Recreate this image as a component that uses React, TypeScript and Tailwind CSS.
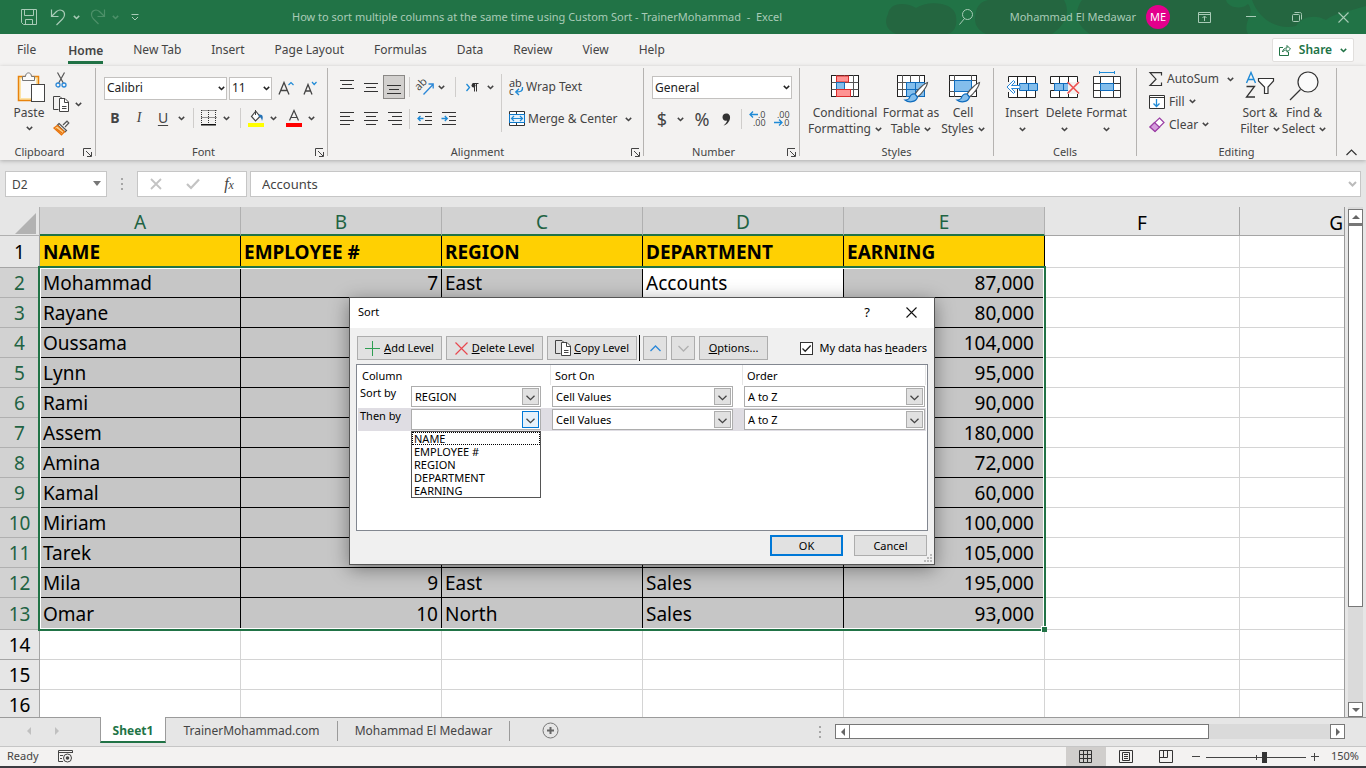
import React from 'react';
import type { ReactNode } from 'react';

type Kids = { children?: ReactNode };

/* ---------- small drawings ---------- */

function Caret({ className = 'text-[#444]' }: { className?: string }) {
  return (
    <svg width="7" height="5" viewBox="0 0 7 5" className={`shrink-0 ${className}`} aria-hidden="true">
      <path d="M0.8 0.9 3.5 3.5 6.2 0.9" fill="none" stroke="currentColor" strokeWidth="1.5" />
    </svg>
  );
}

function Svg({ w, h, children, className = '' }: { w: number; h: number; children: ReactNode; className?: string }) {
  return (
    <svg width={w} height={h} viewBox={`0 0 ${w} ${h}`} fill="none" className={`shrink-0 overflow-visible ${className}`} aria-hidden="true">
      {children}
    </svg>
  );
}

function PasteIcon() {
  return (
    <Svg w={28} h={31}>
      <rect x="1.5" y="4.5" width="20" height="24" fill="#fce3a6" stroke="#e8830c" strokeWidth="1.5" />
      <rect x="4" y="7" width="15" height="19" fill="#fafafa" />
      <path d="M5.5 8.500V4.500H8.500C8.500 -0.300 14.500 -0.300 14.500 4.500H17.500V8.500Z" fill="#fafafa" stroke="#777" />
      <rect x="14.500" y="12.500" width="13" height="17" fill="#fff" stroke="#444" />
    </Svg>
  );
}

function CutIcon() {
  return (
    <Svg w={12} h={16}>
      <path d="M2.500 0.500 8.300 11M9.500 0.500 3.700 11" stroke="#555" strokeWidth="1.200" />
      <circle cx="3" cy="13" r="2" stroke="#2b88d8" strokeWidth="1.300" />
      <circle cx="9" cy="13" r="2" stroke="#2b88d8" strokeWidth="1.300" />
    </Svg>
  );
}

function CopyIcon() {
  return (
    <Svg w={17} h={16}>
      <path d="M5.500 13.500H0.500V0.500H7L8.500 2" stroke="#444" />
      <path d="M6.500 2.500H12L15.500 6V15.500H6.500Z" fill="#fff" stroke="#444" />
      <path d="M11.500 2.500V6.500H15.500M9 10.500H13.500M9 12.500H13.500" stroke="#444" />
    </Svg>
  );
}

function PainterIcon() {
  return (
    <Svg w={17} h={16}>
      <path d="M10 5 14 1.200 15.800 3 12 7" fill="#fff" stroke="#555" strokeWidth="1.200" />
      <path d="M6 3.500 13.500 10.500 12 12 4.500 5Z" fill="#fff" stroke="#555" strokeWidth="1.200" />
      <path d="M4.300 5.500 1 8 8.500 14.800 11.500 11.800Z" fill="#fbd08a" stroke="#e8730c" strokeWidth="1.300" />
      <path d="M3 8.500 9 13" stroke="#e8730c" strokeWidth="1.500" />
    </Svg>
  );
}

function LinesIcon({ rows }: { rows: [number, number, number][] }) {
  return (
    <Svg w={16} h={16}>
      {rows.map(([x, y, w], i) => (
        <rect key={i} x={x} y={y} width={w} height="1" fill="#333" />
      ))}
    </Svg>
  );
}

function IndentIcon({ into }: { into?: boolean }) {
  return (
    <Svg w={16} h={16}>
      <path d="M1 1.500H15M8 5.500H15M8 9.500H15M1 13.500H15" stroke="#333" />
      {into ? (
        <path d="M0.500 7.500H6M3.800 5 6.300 7.500 3.800 10" stroke="#1f8ad6" strokeWidth="1.300" />
      ) : (
        <path d="M1 7.500H6.500M3.500 5 1 7.500 3.500 10" stroke="#1f8ad6" strokeWidth="1.300" />
      )}
    </Svg>
  );
}

function BordersIcon() {
  return (
    <Svg w={16} h={16}>
      <path d="M0.500 0.500H15.500M0.500 7.500H15.500" stroke="#333" strokeDasharray="1 1" />
      <path d="M0.500 0V14M7.500 0V14M14.500 0V14" stroke="#333" strokeDasharray="1 1" />
      <rect y="14" width="15" height="1.500" fill="#111" />
    </Svg>
  );
}

function FillColorIcon() {
  return (
    <Svg w={17} h={17}>
      <path d="M7.500 1.500 3.500 6.500 7.500 11 12 6.500 8 1.500Z" fill="#fff" stroke="#444" strokeWidth="1.200" />
      <path d="M7.500 0V5" stroke="#444" />
      <path d="M11 4.500C15 4 15.500 7 14 11 13.500 8 12 6.500 10.500 6.500Z" fill="#2371b5" />
      <rect y="13" width="16" height="4" fill="#ff0" />
    </Svg>
  );
}

function OrientationIcon() {
  return (
    <Svg w={18} h={18}>
      <g transform="rotate(-45 6 9)">
        <text x="0" y="9" fontSize="11" fill="#444" fontFamily="Open Sans">ab</text>
      </g>
      <path d="M6.500 16.500 16 6.500M11.500 6H16.200V10.500" stroke="#2b88d8" strokeWidth="1.300" />
    </Svg>
  );
}

function WrapIcon() {
  return (
    <Svg w={15} h={17}>
      <text x="0" y="8" fontSize="11" fill="#333" fontFamily="Open Sans">ab</text>
      <text x="0" y="15.500" fontSize="10" fill="#333" fontFamily="Open Sans">c</text>
      <path d="M13.500 8C14 12 12 13 7 13M10 9.800 6.800 13 10 16" stroke="#1f8ad6" strokeWidth="1.400" />
    </Svg>
  );
}

function MergeIcon() {
  return (
    <Svg w={16} h={16}>
      <path d="M0.500 0.500H15.500V14.500H0.500Z" fill="#fff" stroke="#333" />
      <path d="M7.500 0V15" stroke="#333" />
      <rect x="0.500" y="3.500" width="15" height="8" fill="#e5f1fb" stroke="#0f79c9" />
      <path d="M2.500 7.500H13.500M5 5 2.500 7.500 5 10M11 5 13.500 7.500 11 10" stroke="#1f8ad6" strokeWidth="1.200" />
    </Svg>
  );
}

function DecimalIcon({ less }: { less?: boolean }) {
  return (
    <Svg w={17} h={18}>
      {less ? (
        <>
          <text x="4" y="7.500" fontSize="9" fill="#444" fontFamily="Open Sans">.00</text>
          <text x="9" y="16" fontSize="9" fill="#444" fontFamily="Open Sans">.0</text>
          <path d="M1 12.500H9M6 9.500 9 12.500 6 15.500" stroke="#1f8ad6" strokeWidth="1.300" />
        </>
      ) : (
        <>
          <text x="9" y="7.500" fontSize="9" fill="#444" fontFamily="Open Sans">.0</text>
          <text x="4" y="16" fontSize="9" fill="#444" fontFamily="Open Sans">.00</text>
          <path d="M9 4.500H1M4 1.500 1 4.500 4 7.500" stroke="#1f8ad6" strokeWidth="1.300" />
        </>
      )}
    </Svg>
  );
}

function GridBase() {
  return (
    <>
      <rect x="0.500" y="0.500" width="27" height="21" fill="#fff" stroke="#222" />
      <path d="M0.500 7.500H27.500M0.500 14.500H27.500M5.500 0V22M13.500 0V22M22.500 0V22" stroke="#555" />
    </>
  );
}

function ConditionalIcon() {
  return (
    <Svg w={28} h={28}>
      <GridBase />
      <rect x="5.500" y="1" width="12" height="6" fill="#ff9393" stroke="#d92c2c" />
      <rect x="5.500" y="7.500" width="8" height="7" fill="#83beec" stroke="#1b6fb5" />
      <rect x="5.500" y="14.500" width="14" height="7" fill="#ff9393" stroke="#d92c2c" />
    </Svg>
  );
}

function Brush() {
  return (
    <>
      <path d="M30.500 7.500C28 8 20 15 18 19.500L20.500 22C24 19.500 30 12 30.500 7.500Z" fill="#fff" stroke="#555" strokeWidth="1.200" />
      <path d="M18 19C14 18.500 13 21 12 23.500 11 25 9 25 8 25 11 27.500 19 28 20.500 22Z" fill="#83beec" stroke="#0f6cbd" strokeWidth="1.200" />
    </>
  );
}

function FormatTableIcon() {
  return (
    <Svg w={32} h={28}>
      <GridBase />
      <path d="M9.500 7.500H27.500V21.500H9.500Z" fill="#83beec" stroke="#0f6cbd" />
      <path d="M9.500 14.500H27.500M18.500 7.500V21.500" stroke="#0f6cbd" />
      <Brush />
    </Svg>
  );
}

function CellStylesIcon() {
  return (
    <Svg w={32} h={28}>
      <rect x="0.500" y="0.500" width="27" height="21" fill="#fff" stroke="#222" />
      <path d="M0.500 5.500H27.500M0.500 16.500H27.500M5.500 0V22M22.500 0V22" stroke="#555" />
      <rect x="5.500" y="5.500" width="17" height="11" fill="#83beec" stroke="#0f6cbd" />
      <Brush />
    </Svg>
  );
}

function InsertIcon() {
  return (
    <Svg w={32} h={28}>
      <path d="M2.500 5.500H29.500V26.500H2.500ZM11.500 5V27M20.500 5V27" fill="#fff" stroke="#222" />
      <rect x="1" y="11" width="9" height="10" fill="#f3f2f1" />
      <path d="M13.500 12.500H31.500V19.500H13.500ZM22.500 12V20" fill="#83beec" stroke="#0f6cbd" />
      <path d="M14 14.500H5.500L9 11 7.500 9.500 1 16 7.500 22.500 9 21 5.500 17.500H14Z" fill="#fff" stroke="#2b88d8" />
    </Svg>
  );
}

function DeleteIcon() {
  return (
    <Svg w={32} h={28}>
      <path d="M2.500 12.500V5.500H29.500V12.500ZM2.500 19.500V26.500H29.500V19.500ZM11.500 5V12M20.500 5V12M11.500 20V27M20.500 20V27" fill="#fff" stroke="#222" />
      <path d="M6.500 12.500H22.500V19.500H6.500ZM15.500 12V20" fill="#83beec" stroke="#0f6cbd" />
      <rect x="20" y="11" width="12" height="12" fill="#f3f2f1" />
      <path d="M19.500 11 31 22.500M31 11 19.500 22.500" stroke="#ee5252" strokeWidth="1.700" />
    </Svg>
  );
}

function FormatIcon() {
  return (
    <Svg w={28} h={28}>
      <path d="M6.500 1.500H21.500M6.500 0V3M21.500 0V3" stroke="#1f8ad6" />
      <path d="M0.500 5.500H27.500V26.500H0.500ZM7.500 5V27M20.500 5V27M0.500 12.500H27.500M0.500 19.500H27.500" fill="#fff" stroke="#333" />
      <rect x="7.500" y="12.500" width="13" height="7" fill="#83beec" stroke="#0f6cbd" />
    </Svg>
  );
}

function SortFilterIcon() {
  return (
    <Svg w={30} h={28}>
      <path d="M1.500 12 6 1.500 10.500 12M3 8.500H9" stroke="#1f8ad6" strokeWidth="1.400" />
      <path d="M1.500 15.500H9.500L1.500 26H10" stroke="#333" strokeWidth="1.300" />
      <path d="M13.500 7.500H28.500V10L23 16V22.500H19.500V16L13.500 10Z" fill="#fff" stroke="#333" strokeWidth="1.200" />
    </Svg>
  );
}

function FindIcon() {
  return (
    <Svg w={30} h={30}>
      <circle cx="19" cy="11" r="10" fill="#fafafa" stroke="#333" strokeWidth="1.200" />
      <path d="M11.500 18.500 1 29" stroke="#333" strokeWidth="1.300" />
    </Svg>
  );
}

/* ---------- ribbon parts ---------- */

function IconBtn({ label, className = 'w-6', children }: Kids & { label: string; className?: string }) {
  return (
    <button type="button" aria-label={label} className={`flex h-6 shrink-0 items-center justify-center ${className}`}>
      {children}
    </button>
  );
}

function Rule({ className = 'mx-1' }: { className?: string }) {
  return <span className={`h-5 w-px shrink-0 bg-[#cfcdcb] ${className}`} />;
}

function Group({ name, launcher, className, children }: Kids & { name: string; launcher?: boolean; className: string }) {
  return (
    <section aria-label={name} className={`flex h-[88px] shrink-0 flex-col border-r border-[#b5b3b1] ${className}`}>
      <div className="min-h-0 flex-1">{children}</div>
      <div className="flex h-2 items-center text-[11px] leading-4">
        <span className="flex-1 text-center">{name}</span>
        {launcher && (
          <button type="button" aria-label={`${name} settings`} className="flex w-4 justify-end pr-[3px]">
            <Svg w={9} h={9}>
              <path d="M0.500 8V0.500H8M3 3 8 8M8.500 4V8.500H4" stroke="#444" />
            </Svg>
          </button>
        )}
      </div>
    </section>
  );
}

function BigButton({ icon, lines, className }: { icon: ReactNode; lines: [string, string?]; className: string }) {
  return (
    <button type="button" className={`flex shrink-0 flex-col items-center leading-4 whitespace-nowrap ${className}`}>
      <span className="flex h-[34px] items-start">{icon}</span>
      <span>{lines[0]}</span>
      <span className="flex h-4 items-center gap-1">
        {lines[1]}
        <Caret />
      </span>
    </button>
  );
}

function Combo({ label, value, className }: { label: string; value: string; className: string }) {
  return (
    <div className={`relative h-[23px] shrink-0 ${className}`}>
      <select aria-label={label} className="block h-full w-full appearance-none border border-[#c3c1bf] bg-white pl-0.5 text-xs text-[#222]">
        <option>{value}</option>
      </select>
      <span className="pointer-events-none absolute inset-y-0 right-0.5 flex items-center">
        <Caret className="text-[#222]" />
      </span>
    </div>
  );
}

/* ---------- sheet ---------- */

const rows: [string, string, string, string, string][] = [
  ['Mohammad', '7', 'East', 'Accounts', '87,000'],
  ['Rayane', '', '', '', '80,000'],
  ['Oussama', '', '', '', '104,000'],
  ['Lynn', '', '', '', '95,000'],
  ['Rami', '', '', '', '90,000'],
  ['Assem', '', '', '', '180,000'],
  ['Amina', '', '', '', '72,000'],
  ['Kamal', '', '', '', '60,000'],
  ['Miriam', '', '', '', '100,000'],
  ['Tarek', '', '', '', '105,000'],
  ['Mila', '9', 'East', 'Sales', '195,000'],
  ['Omar', '10', 'North', 'Sales', '93,000'],
];

function Sheet() {
  return (
    <div className="relative min-w-0 flex-1 overflow-hidden border-r border-[#9b9b9b] bg-white">
      <table className="w-full table-fixed border-separate border-spacing-0 text-[19px] leading-6 whitespace-nowrap text-black">
        <colgroup>
          <col className="w-10" />
          <col className="w-[201px]" />
          <col className="w-[201px]" />
          <col className="w-[201px]" />
          <col className="w-[201px]" />
          <col className="w-[201px]" />
          <col className="w-[195px]" />
          <col />
        </colgroup>
        <thead>
          <tr className="h-[29px] bg-[#e6e6e6]">
            <th className="border-r border-b border-[#b0b0b0] p-0">
              <Svg w={21} h={21} className="ml-auto mr-[3px] mt-1">
                <path d="M21 0V21H0Z" fill="#b2b2b2" />
              </Svg>
            </th>
            {['A', 'B', 'C', 'D', 'E'].map((c) => (
              <th key={c} className="border-r border-b-2 border-r-[#b0b0b0] border-b-[#217346] bg-[#d2d2d2] p-0 pt-[3px] font-normal text-[#1f6343]">
                {c}
              </th>
            ))}
            <th className="border-r border-b border-[#a5a5a5] p-0 pt-[3px] font-normal">F</th>
            <th className="border-b border-[#a5a5a5] p-0 pt-[3px] pr-px text-right font-normal">G</th>
          </tr>
        </thead>
        <tbody>
          <tr className="h-8">
            <th className="border-r border-b border-[#a5a5a5] bg-[#e6e6e6] p-0 font-normal">1</th>
            {['NAME', 'EMPLOYEE #', 'REGION', 'DEPARTMENT', 'EARNING'].map((h) => (
              <th key={h} className="border-r border-b border-black bg-[#ffd002] py-0 pr-0 pl-[3px] text-left font-bold">
                {h}
              </th>
            ))}
            <td className="border-r border-b border-[#d4d4d4] p-0" />
            <td className="border-b border-[#d4d4d4] p-0" />
          </tr>
          {rows.map((r, i) => (
            <tr key={r[0]} className={i === rows.length - 1 ? 'h-8' : 'h-[30px]'}>
              <th className="border-r border-b border-[#b0b0b0] bg-[#d2d2d2] p-0 font-normal text-[#1f6343]">{i + 2}</th>
              {r.map((v, j) => (
                <td
                  key={j}
                  className={`border-r border-b border-black py-0 pl-[3px] ${j === 3 && i === 0 ? 'bg-white' : 'bg-[#c6c6c6]'} ${
                    j === 4 ? 'pr-2.5 text-right' : j === 1 ? 'pr-[3px] text-right' : 'pr-0'
                  }`}
                >
                  {v}
                </td>
              ))}
              <td className="border-r border-b border-[#d4d4d4] p-0" />
              <td className="border-b border-[#d4d4d4] p-0" />
            </tr>
          ))}
          {[14, 15, 16].map((n) => (
            <tr key={n} className="h-[30px]">
              <th className="border-r border-b border-[#a5a5a5] bg-[#e6e6e6] p-0 font-normal">{n}</th>
              {[0, 1, 2, 3, 4, 5].map((k) => (
                <td key={k} className="border-r border-b border-[#d4d4d4] p-0" />
              ))}
              <td className="border-b border-[#d4d4d4] p-0" />
            </tr>
          ))}
        </tbody>
      </table>
      <div className="pointer-events-none absolute top-[59px] left-[38px] h-[365px] w-[1008px] border-2 border-[#217346]">
        <div className="h-full border border-white" />
        <span className="absolute -right-[3px] -bottom-[3px] h-1.5 w-1.5 border-t border-l border-white bg-[#217346]" />
      </div>
    </div>
  );
}

/* ---------- dialog ---------- */

function DlgButton({ children, className = '', label }: Kids & { className?: string; label?: string }) {
  return (
    <button type="button" aria-label={label} className={`flex shrink-0 items-center justify-center bg-[#e1e1e1] whitespace-nowrap ${className}`}>
      {children}
    </button>
  );
}

function DlgSelect({ label, value, active, className = '' }: { label: string; value: string; active?: boolean; className?: string }) {
  return (
    <div className={`relative h-[21px] ${className}`}>
      <select aria-label={label} className="block h-full w-full appearance-none border border-[#adadad] bg-white pl-[3px] text-[11px] text-black">
        <option>{value}</option>
      </select>
      <span
        className={`pointer-events-none absolute top-0.5 right-0.5 flex h-[17px] w-[17px] items-center justify-center border ${
          active ? 'border-[#0078d7] bg-[#e5f1fb]' : 'border-[#adadad] bg-[#e1e1e1]'
        }`}
      >
        <Svg w={9} h={6} className="mt-0.5">
          <path d="M0.500 0.700 4.500 4.700 8.500 0.700" stroke="#444" strokeWidth="1.300" />
        </Svg>
      </span>
    </div>
  );
}

function SortRow({ label, column, active }: { label: string; column: string; active?: boolean }) {
  return (
    <div className={`mx-px flex h-[23px] items-start gap-[11px] pt-px pr-px ${active ? 'bg-[#dfdde3]' : ''}`}>
      <div className="flex">
        <span className="w-[53px] pl-0.5 leading-[14px]">{label}</span>
        <DlgSelect label={`${label} column`} value={column} active={active} className="w-[130px]" />
      </div>
      <DlgSelect label={`${label} sort on`} value="Cell Values" className="flex-1" />
      <DlgSelect label={`${label} order`} value="A to Z" className="flex-1" />
    </div>
  );
}

function SortDialog() {
  return (
    <div
      role="dialog"
      aria-label="Sort"
      className="absolute top-[297px] left-[349px] flex h-[268px] w-[586px] flex-col border border-[#555] bg-[#f0f0f0] text-[11px] leading-[14px] text-black shadow-[0_4px_18px_rgba(0,0,0,0.4)]"
    >
      <div className="flex h-[30px] items-center bg-white pr-[17px] pb-0.5 pl-2">
        <span className="flex-1">Sort</span>
        <button type="button" aria-label="Help" className="mr-9 text-[13px]">?</button>
        <button type="button" aria-label="Close">
          <Svg w={11} h={11}>
            <path d="M0.500 0.500 10.500 10.500M10.500 0.500 0.500 10.500" stroke="#111" strokeWidth="1.100" />
          </Svg>
        </button>
      </div>
      <div className="flex h-9 items-center gap-1 px-[7px] pt-1">
        <DlgButton className="h-6 w-[85px] gap-1 border border-[#adadad]">
          <Svg w={15} h={15}>
            <path d="M7.500 0V15M0 7.500H15" stroke="#2e9e52" />
          </Svg>
          <span><u>A</u>dd Level</span>
        </DlgButton>
        <DlgButton className="h-6 w-[97px] gap-1 border border-[#adadad]">
          <Svg w={13} h={13}>
            <path d="M0.500 0.500 12.500 12.500M12.500 0.500 0.500 12.500" stroke="#e8484f" strokeWidth="1.200" />
          </Svg>
          <span><u>D</u>elete Level</span>
        </DlgButton>
        <div className="flex items-center gap-0.5">
          <DlgButton className="h-6 w-[90px] gap-0.5 border border-[#adadad]">
            <CopyIcon />
            <span><u>C</u>opy Level</span>
          </DlgButton>
          <span className="h-[26px] w-px bg-black" />
        </div>
        <DlgButton label="Move up" className="-ml-px h-6 w-6 border border-[#adadad]">
          <Svg w={11} h={7}>
            <path d="M0.500 6 5.500 1 10.500 6" stroke="#2b88d8" strokeWidth="1.300" />
          </Svg>
        </DlgButton>
        <DlgButton label="Move down" className="h-6 w-6 border border-[#adadad]">
          <Svg w={11} h={7}>
            <path d="M0.500 1 5.500 6 10.500 1" stroke="#b0b0b0" strokeWidth="1.300" />
          </Svg>
        </DlgButton>
        <DlgButton className="h-6 w-[69px] border border-[#adadad]">
          <span><u>O</u>ptions...</span>
        </DlgButton>
        <label className="ml-auto flex items-center gap-[7px] whitespace-nowrap">
          <span className="relative h-[13px] w-[13px]">
            <input type="checkbox" defaultChecked className="block h-[13px] w-[13px] appearance-none border border-[#333] bg-white" />
            <Svg w={13} h={13} className="pointer-events-none absolute inset-0">
              <path d="M2.500 6.500 5.200 9.200 10.700 3.500" stroke="#222" strokeWidth="1.300" />
            </Svg>
          </span>
          <span>My data has <u>h</u>eaders</span>
        </label>
      </div>
      <div className="mx-1.5 h-[167px] border border-[#828790] bg-white">
        <div className="flex h-5 items-center">
          <span className="h-5 w-[194px] border-r border-[#e5e5e5] pt-1 pl-[5px]">Column</span>
          <span className="h-5 w-48 border-r border-[#e5e5e5] pt-1 pl-1">Sort On</span>
          <span className="h-5 w-[183px] border-r border-[#e5e5e5] pt-1 pl-1">Order</span>
        </div>
        <SortRow label="Sort by" column="REGION" />
        <div className="relative">
          <SortRow label="Then by" column="" active />
          <ul role="listbox" aria-label="Columns" className="absolute top-[23px] left-[54px] w-[130px] border border-[#555] bg-white leading-[13px]">
            {['NAME', 'EMPLOYEE #', 'REGION', 'DEPARTMENT', 'EARNING'].map((o, i) => (
              <li
                key={o}
                role="option"
                aria-selected={i === 0}
                className={`h-[13px] pl-0.5 ${i === 0 ? 'outline-1 -outline-offset-1 outline-dotted outline-black' : ''}`}
              >
                {o}
              </li>
            ))}
          </ul>
        </div>
      </div>
      <div className="flex gap-[11px] pt-1 pr-[7px]">
        <DlgButton className="ml-auto h-[21px] w-[73px] border-2 border-[#0078d7]">OK</DlgButton>
        <DlgButton className="h-[21px] w-[73px] border border-[#adadad]">Cancel</DlgButton>
      </div>
      <Svg w={8} h={8} className="absolute right-0.5 bottom-0.5">
        <path d="M6 0h2v2h-2zM6 3h2v2h-2zM6 6h2v2h-2zM3 3h2v2h-2zM3 6h2v2h-2zM0 6h2v2h-2z" fill="#bbb" />
      </Svg>
    </div>
  );
}

/* ---------- bars ---------- */

function TitleBar() {
  return (
    <header className="relative flex h-[34px] shrink-0 items-center overflow-hidden bg-[#217346] text-[11px] text-[#a9cbb7]">
      <Svg w={490} h={34} className="absolute top-0 right-0">
        <g fill="#246640">
          <path d="M12 14C14 2 30 2 40 8 52 0 78 2 80 16 82 28 76 34 70 34H20C10 30 8 22 12 14Z" />
          <path d="M100 12C102 2 110 0 114 0H188C196 14 186 28 176 34H110C98 28 98 20 100 12Z" />
          <path d="M206 0H350C352 8 366 10 372 4 380 14 366 22 372 34H214C202 26 196 14 206 0Z" />
          <path d="M376 0H490V6C470 12 456 14 450 20 440 14 426 16 420 26 404 30 384 22 376 0Z" />
        </g>
      </Svg>
      <div className="relative flex w-[280px] shrink-0 items-center pl-[21px]">
        <button type="button" aria-label="Save">
          <Svg w={16} h={16}>
            <path d="M0.500 0.500H15.500V15.500H2.500L0.500 13.500ZM3.500 0.500V6.500H12.500V0.500M4.500 15.500V10.500H11.500V15.500" stroke="#a9cbb7" />
          </Svg>
        </button>
        <button type="button" aria-label="Undo" className="ml-3.5 flex items-center gap-1.5">
          <Svg w={16} h={17}>
            <path d="M0.500 0.500V7.500H7.500M0.500 7.500 5.500 2.500C9 -0.500 14 1.500 13.500 6 13.300 8 12.500 9 11.500 10L5.500 16" stroke="#a9cbb7" strokeWidth="1.200" />
          </Svg>
          <Caret className="text-[#a9cbb7]" />
        </button>
        <button type="button" aria-label="Redo" className="ml-2.5 flex items-center gap-1.5">
          <Svg w={16} h={17}>
            <path d="M14.500 0.500V7.500H7.500M14.500 7.500 9.500 2.500C6 -0.500 1 1.500 1.500 6 1.700 8 2.500 9 3.500 10L8.500 15" stroke="#4d9069" strokeWidth="1.200" />
          </Svg>
          <Caret className="text-[#4d9069]" />
        </button>
        <button type="button" aria-label="Customize Quick Access Toolbar" className="ml-3">
          <Svg w={8} h={7}>
            <path d="M0.500 0.500H7.500M1 3 4 6 7 3" stroke="#a9cbb7" />
          </Svg>
        </button>
      </div>
      <h1 className="relative flex-1 pl-3 whitespace-pre">
        How to sort multiple columns at the same time using Custom Sort - TrainerMohammad  -  Excel
      </h1>
      <div className="relative flex shrink-0 items-center">
        <button type="button" aria-label="Search">
          <Svg w={14} h={16}>
            <circle cx="8.500" cy="5.500" r="5" stroke="#a9cbb7" />
            <path d="M5.500 9.500 0.500 15.500" stroke="#a9cbb7" />
          </Svg>
        </button>
        <span className="ml-[37px]">Mohammad El Medawar</span>
        <span className="ml-2.5 flex h-6 w-6 items-center justify-center rounded-full bg-[#e3008c] text-[11px] text-white">ME</span>
        <button type="button" aria-label="Ribbon display options" className="ml-7">
          <Svg w={13} h={11}>
            <path d="M0.500 0.500H12.500V10.500H0.500ZM0.500 2.500H12.500M6.500 9V4.500M4.500 6 6.500 4 8.500 6" stroke="#a9cbb7" />
          </Svg>
        </button>
        <button type="button" aria-label="Minimize" className="ml-[35px]">
          <Svg w={10} h={10}><path d="M0 4.500H10" stroke="#a9cbb7" /></Svg>
        </button>
        <button type="button" aria-label="Restore" className="ml-9">
          <Svg w={10} h={10}>
            <rect x="0.500" y="2.500" width="7" height="7" rx="1" stroke="#a9cbb7" />
            <path d="M2.500 0.500H7.500C9 0.500 9.500 1 9.500 2.500V7.500" stroke="#a9cbb7" />
          </Svg>
        </button>
        <button type="button" aria-label="Close window" className="mr-[17px] ml-9">
          <Svg w={11} h={11}><path d="M0.500 0.500 10.500 10.500M10.500 0.500 0.500 10.500" stroke="#a9cbb7" strokeWidth="1.100" /></Svg>
        </button>
      </div>
    </header>
  );
}

function Tabs() {
  return (
    <nav className="flex h-8 shrink-0 items-center bg-[#f3f2f1] pr-3 pl-[17px] text-xs text-[#444]">
      <div className="flex flex-1 items-center gap-[30px] whitespace-nowrap">
        <a href="#file" className="mr-0.5">File</a>
        <a href="#home" className="border-b-[3px] border-[#217346] pt-[5px] font-semibold leading-5">Home</a>
        {['New Tab', 'Insert', 'Page Layout', 'Formulas', 'Data', 'Review', 'View', 'Help'].map((t) => (
          <a key={t} href={`#${t}`}>{t}</a>
        ))}
      </div>
      <button type="button" className="flex h-6 w-[82px] items-center justify-between rounded-xs border border-[#e1dfdd] bg-white px-1.5 font-semibold text-[#217346]">
        <Svg w={12} h={12}>
          <path d="M4 3.500H0.500V11.500H9.500V8" stroke="#217346" />
          <path d="M3.500 8C4 5 6 4 8 4V1.500L11.500 5 8 8.200V6C6 6 4.500 6.500 3.500 8Z" stroke="#217346" />
        </Svg>
        Share
        <Caret className="text-[#217346]" />
      </button>
    </nav>
  );
}

function Ribbon() {
  return (
    <div className="relative z-10 flex h-[94px] shrink-0 items-start bg-[#f3f2f1] pt-0.5 text-xs text-[#444] shadow-[0_1px_4px_rgba(0,0,0,0.25)]">
      <Group name="Clipboard" launcher className="w-24">
        <div className="flex pt-1">
          <button type="button" className="ml-[13px] flex w-8 flex-col items-center leading-4">
            <span className="pl-1"><PasteIcon /></span>
            <span className="mt-0.5">Paste</span>
            <span className="flex h-3.5 items-center"><Caret /></span>
          </button>
          <div className="-mt-1 ml-[5px] flex flex-col">
            <IconBtn label="Cut" className="w-[22px]"><CutIcon /></IconBtn>
            <div className="flex items-center gap-[3px]">
              <IconBtn label="Copy" className="w-[22px]"><CopyIcon /></IconBtn>
              <Caret />
            </div>
            <IconBtn label="Format Painter" className="w-[22px]"><PainterIcon /></IconBtn>
          </div>
        </div>
      </Group>

      <Group name="Font" launcher className="w-[232px]">
        <div className="flex items-center gap-0.5 pt-2 pl-2">
          <Combo label="Font" value="Calibri" className="w-[123px]" />
          <Combo label="Font size" value="11" className="w-[43px]" />
          <IconBtn label="Increase font size" className="w-6">
            <Svg w={16} h={15}>
              <path d="M1 13.500 6 1.500 11 13.500M2.800 9.500H9.200" stroke="#444" strokeWidth="1.300" />
              <path d="M10.500 4 13 1.500 15.500 4" stroke="#1f8ad6" strokeWidth="1.200" />
            </Svg>
          </IconBtn>
          <IconBtn label="Decrease font size" className="w-5">
            <Svg w={14} h={15}>
              <path d="M1 13.500 5 3.500 9 13.500M2.500 10H7.500" stroke="#444" strokeWidth="1.300" />
              <path d="M9 1 11.200 3.500 13.500 1" stroke="#1f8ad6" strokeWidth="1.200" />
            </Svg>
          </IconBtn>
        </div>
        <div className="mt-1.5 flex items-center pl-[7px] text-sm">
          <IconBtn label="Bold"><b>B</b></IconBtn>
          <IconBtn label="Italic"><i className="font-['Liberation_Serif']">I</i></IconBtn>
          <IconBtn label="Underline"><u className="underline-offset-2">U</u></IconBtn>
          <IconBtn label="Underline options" className="w-3"><Caret /></IconBtn>
          <Rule className="mr-[7px] ml-1.5" />
          <IconBtn label="Borders" className="w-4"><BordersIcon /></IconBtn>
          <IconBtn label="Border options" className="w-[19px]"><Caret /></IconBtn>
          <Rule className="mr-[7px] ml-1" />
          <IconBtn label="Fill color" className="w-4"><FillColorIcon /></IconBtn>
          <IconBtn label="Fill color options" className="w-[18px]"><Caret /></IconBtn>
          <IconBtn label="Font color" className="ml-1 w-4">
            <Svg w={16} h={17}>
              <path d="M3.500 10.500 8 0.500 12.500 10.500M5 7.500H11" stroke="#444" strokeWidth="1.200" />
              <rect y="13" width="16" height="4" fill="#f00" />
            </Svg>
          </IconBtn>
          <IconBtn label="Font color options" className="w-[18px]"><Caret /></IconBtn>
        </div>
      </Group>

      <Group name="Alignment" launcher className="w-[316px]">
        <div className="flex pl-[7px]">
          <div className="flex w-[166px] flex-col gap-2 pt-[7px]">
            <div className="flex items-center">
              <IconBtn label="Top align"><LinesIcon rows={[[1, 1, 14], [3, 5, 10], [1, 9, 14]]} /></IconBtn>
              <IconBtn label="Middle align"><LinesIcon rows={[[1, 4, 14], [3, 8, 10], [1, 12, 14]]} /></IconBtn>
              <IconBtn label="Bottom align" className="w-[22px] border border-[#8a8886] bg-[#d2d0ce]">
                <LinesIcon rows={[[1, 6, 14], [3, 10, 10], [1, 14, 14]]} />
              </IconBtn>
              <Rule className="mr-[7px] ml-1" />
              <IconBtn label="Orientation" className="w-[18px]"><OrientationIcon /></IconBtn>
              <IconBtn label="Orientation options" className="w-3"><Caret /></IconBtn>
              <Rule className="mx-2" />
              <IconBtn label="Text direction" className="w-4">
                <Svg w={13} h={11}>
                  <path d="M0.500 2 3.500 5.500 0.500 9" stroke="#1f8ad6" strokeWidth="1.300" />
                  <path d="M8.500 9.500V1.500M10.500 9.500V1.500M6.500 1.500H12.500" stroke="#333" />
                  <circle cx="7.500" cy="3.500" r="2" fill="#333" />
                </Svg>
              </IconBtn>
              <IconBtn label="Text direction options" className="ml-1 w-3"><Caret /></IconBtn>
            </div>
            <div className="flex items-center">
              <IconBtn label="Align left"><LinesIcon rows={[[1, 1, 14], [1, 5, 10], [1, 9, 14], [1, 13, 10]]} /></IconBtn>
              <IconBtn label="Center"><LinesIcon rows={[[1, 1, 14], [3, 5, 10], [1, 9, 14], [3, 13, 10]]} /></IconBtn>
              <IconBtn label="Align right"><LinesIcon rows={[[1, 1, 14], [5, 5, 10], [1, 9, 14], [5, 13, 10]]} /></IconBtn>
              <Rule className="mr-[3px] ml-0.5" />
              <IconBtn label="Decrease indent"><IndentIcon /></IconBtn>
              <IconBtn label="Increase indent"><IndentIcon into /></IconBtn>
            </div>
          </div>
          <span className="mt-1.5 h-[58px] w-px bg-[#cfcdcb]" />
          <div className="flex flex-col gap-2 pt-[7px] pl-[7px] whitespace-nowrap">
            <button type="button" className="flex h-6 items-center gap-0.5"><WrapIcon />Wrap Text</button>
            <button type="button" className="flex h-6 items-center gap-[3px]">
              <MergeIcon />Merge &amp; Center<span className="ml-1 flex"><Caret /></span>
            </button>
          </div>
        </div>
      </Group>

      <Group name="Number" launcher className="w-[156px]">
        <div className="pt-2 pl-2"><Combo label="Number format" value="General" className="w-[140px]" /></div>
        <div className="mt-2 flex items-center pl-1.5">
          <IconBtn label="Accounting format"><span className="text-lg">$</span></IconBtn>
          <IconBtn label="Accounting options" className="w-3"><Caret /></IconBtn>
          <IconBtn label="Percent style" className="ml-1 w-6"><span className="text-lg">%</span></IconBtn>
          <IconBtn label="Comma style">
            <Svg w={9} h={13}>
              <path d="M4.200 0.500C7 0.500 8.500 2.500 8 5.500 7.500 9 4.500 12 1.500 12.500 3.500 11 5 9 5 7.500 2.500 8.500 0.500 6.500 0.500 4.200 0.500 2 2 0.500 4.200 0.500Z" fill="#333" />
            </Svg>
          </IconBtn>
          <Rule className="mx-[3px]" />
          <IconBtn label="Increase decimal"><DecimalIcon /></IconBtn>
          <IconBtn label="Decrease decimal"><DecimalIcon less /></IconBtn>
        </div>
      </Group>

      <Group name="Styles" className="w-[194px]">
        <div className="flex pt-[3px] pl-2">
          <BigButton icon={<span className="pt-1"><ConditionalIcon /></span>} lines={['Conditional', 'Formatting']} className="w-[74px]" />
          <BigButton icon={<span className="pt-1 pl-1"><FormatTableIcon /></span>} lines={['Format as', 'Table']} className="w-[58px]" />
          <BigButton icon={<span className="pt-1 pl-1"><CellStylesIcon /></span>} lines={['Cell', 'Styles']} className="w-[46px]" />
        </div>
      </Group>

      <Group name="Cells" className="w-[143px]">
        <div className="flex pt-[3px] pl-[7px]">
          <BigButton icon={<InsertIcon />} lines={['Insert']} className="w-[42px]" />
          <BigButton icon={<DeleteIcon />} lines={['Delete']} className="w-[42px]" />
          <BigButton icon={<FormatIcon />} lines={['Format']} className="w-[43px]" />
        </div>
      </Group>

      <Group name="Editing" className="w-[200px]">
        <div className="flex">
          <div className="flex w-[97px] flex-col pl-3 whitespace-nowrap">
            <button type="button" className="flex h-[22px] items-center gap-1">
              <Svg w={14} h={15}>
                <path d="M12.500 3.500V0.700H1L7 7.200 1 13.500H12.500V10.500" stroke="#333" strokeWidth="1.200" />
              </Svg>
              AutoSum<span className="ml-1 flex"><Caret /></span>
            </button>
            <button type="button" className="flex h-[23px] items-center gap-1">
              <Svg w={16} h={14}>
                <path d="M0.500 0.500H15.500V13.500H0.500ZM0.500 2.500H15.500" fill="#fff" stroke="#333" />
                <path d="M7.500 4V11.500M4.500 8.500 7.500 11.500 10.500 8.500" stroke="#1f8ad6" strokeWidth="1.300" />
              </Svg>
              Fill<Caret />
            </button>
            <button type="button" className="flex h-[23px] items-center gap-1">
              <Svg w={16} h={16}>
                <path d="M10.500 1 15 5.500 6 14.500 1 10Z" fill="#fff" stroke="#9b3fa5" strokeWidth="1.200" />
                <path d="M5.500 5.500 10.500 10.200 6 14.500 1 10Z" fill="#d59ddd" stroke="#9b3fa5" strokeWidth="1.200" />
              </Svg>
              Clear<Caret />
            </button>
          </div>
          <div className="flex pt-[3px]">
            <BigButton icon={<SortFilterIcon />} lines={['Sort &', 'Filter']} className="w-[52px]" />
            <BigButton icon={<FindIcon />} lines={['Find &', 'Select']} className="w-9" />
          </div>
        </div>
      </Group>
      <button type="button" aria-label="Collapse ribbon" className="mr-[9px] mb-1 ml-auto self-end">
        <Svg w={11} h={7}><path d="M0.500 6 5.500 1 10.500 6" stroke="#333" strokeWidth="1.200" /></Svg>
      </button>
    </div>
  );
}

function Dots() {
  return (
    <Svg w={2} h={12}>
      <path d="M0 0h2v2h-2zM0 5h2v2h-2zM0 10h2v2h-2z" fill="#a6a6a6" />
    </Svg>
  );
}

function FormulaBar() {
  return (
    <div className="flex h-[47px] shrink-0 items-start bg-[#e6e6e6] px-[5px] pt-[11px] text-[13px] text-[#444]">
      <div className="relative h-[26px] w-[102px] shrink-0">
        <input aria-label="Name box" defaultValue="D2" className="h-full w-full border border-[#c6c6c6] bg-white pl-1.5 text-xs" />
        <Svg w={8} h={5} className="pointer-events-none absolute top-2.5 right-1.5"><path d="M0 0H8L4 5Z" fill="#777" /></Svg>
      </div>
      <span className="flex h-[26px] w-[30px] items-center justify-center"><Dots /></span>
      <div className="flex h-[26px] w-[110px] shrink-0 items-center justify-around border border-[#c6c6c6] bg-white">
        <button type="button" aria-label="Cancel entry">
          <Svg w={12} h={12}><path d="M1 1 11 11M11 1 1 11" stroke="#c3c3c3" strokeWidth="1.800" /></Svg>
        </button>
        <button type="button" aria-label="Enter">
          <Svg w={14} h={12}><path d="M1 6 5 10 13 1.500" stroke="#c3c3c3" strokeWidth="2.200" /></Svg>
        </button>
        <button type="button" aria-label="Insert function" className="font-['Liberation_Serif'] text-base italic leading-5 text-[#444]">
          f<span className="text-xs">x</span>
        </button>
      </div>
      <div className="relative ml-[3px] h-[26px] flex-1">
        <input aria-label="Formula bar" defaultValue="Accounts" className="h-full w-full border border-[#c6c6c6] bg-white pl-[11px]" />
        <span className="pointer-events-none absolute top-2.5 right-1"><Svg w={9} h={6}><path d="M1 1 4.500 4.500 8 1" stroke="#bbb" strokeWidth="2" /></Svg></span>
      </div>
    </div>
  );
}

function ScrollArrow({ d, label, className }: { d: string; label: string; className: string }) {
  return (
    <button type="button" aria-label={label} className={`flex shrink-0 items-center justify-center border border-[#777] bg-white ${className}`}>
      <Svg w={8} h={8}><path d={d} fill="#666" /></Svg>
    </button>
  );
}

function SheetTabs() {
  return (
    <div className="flex h-[29px] shrink-0 items-start border-t border-[#9b9b9b] bg-[#e6e6e6] text-xs text-[#444]">
      <div className="flex h-[25px] w-[100px] items-center gap-6 pl-[27px]">
        <button type="button" aria-label="Previous sheet"><Svg w={4} h={8}><path d="M4 0V8L0 4Z" fill="#c0c0c0" /></Svg></button>
        <button type="button" aria-label="Next sheet"><Svg w={4} h={8}><path d="M0 0V8L4 4Z" fill="#c0c0c0" /></Svg></button>
      </div>
      <button type="button" className="-mt-px h-[26px] w-[66px] border-x border-b-2 border-x-[#9b9b9b] border-b-[#217346] bg-white pt-1 font-bold text-[#217346]">Sheet1</button>
      <button type="button" className="mt-[3px] h-5 w-[172px] border-r border-[#9b9b9b]">TrainerMohammad.com</button>
      <button type="button" className="mt-[3px] h-5 w-[172px] border-r border-[#9b9b9b]">Mohammad El Medawar</button>
      <button type="button" aria-label="New sheet" className="mt-1 ml-8">
        <Svg w={17} h={17}>
          <circle cx="8.500" cy="8.500" r="7.500" stroke="#777" />
          <path d="M8.500 5V12M5 8.500H12" stroke="#666" strokeWidth="2" />
        </Svg>
      </button>
      <div className="mt-1.5 mr-[21px] ml-auto flex h-[15px] items-center">
        <Dots />
        <div className="ml-3.5 flex h-[15px] bg-[#dadada]">
          <ScrollArrow d="M6 0V8L2 4Z" label="Scroll left" className="w-[15px]" />
          <div className="-ml-px h-full w-[360px] border border-[#777] bg-white" />
          <ScrollArrow d="M2 0V8L6 4Z" label="Scroll right" className="ml-[121px] w-[15px]" />
        </div>
      </div>
    </div>
  );
}

function StatusBar() {
  return (
    <footer className="flex h-[22px] shrink-0 items-center border-t border-b-2 border-t-[#c6c6c6] border-b-[#3b3b40] bg-[#f3f2f1] pl-[7px] text-[11px] text-[#444]">
      <span>Ready</span>
      <button type="button" aria-label="Record macro" className="ml-[19px]">
        <Svg w={15} h={13}>
          <path d="M14.500 3V0.500H0.500V11.500H5M0.500 2.500H14.500M2 5.500H5M2 8.500H4" stroke="#444" />
          <circle cx="9.500" cy="8" r="4" stroke="#444" />
          <circle cx="9.500" cy="8" r="1.800" fill="#444" />
        </Svg>
      </button>
      <div className="ml-auto flex h-full items-center">
        <button type="button" aria-label="Normal view" className="flex h-full w-10 items-center justify-center bg-[#d0cecc]">
          <Svg w={13} h={13}><path d="M0.500 0.500H12.500V12.500H0.500ZM4.500 0V13M8.500 0V13M0 4.500H13M0 8.500H13" stroke="#333" /></Svg>
        </button>
        <button type="button" aria-label="Page layout view" className="flex w-10 justify-center">
          <Svg w={14} h={13}><path d="M0.500 0.500H13.500V12.500H0.500ZM3.500 2.500H10.500V10.500H3.500ZM5 4.500H9M5 6.500H9M5 8.500H9" stroke="#333" /></Svg>
        </button>
        <button type="button" aria-label="Page break view" className="flex w-10 justify-center">
          <Svg w={14} h={13}><path d="M0.500 0.500H13.500V12.500H0.500ZM4.500 0.500V7.500M8.500 0.500V7.500M0.500 7.500H8.500" stroke="#333" /></Svg>
        </button>
        <button type="button" aria-label="Zoom out" className="ml-1.5"><Svg w={8} h={8}><path d="M0 3.500H8" stroke="#444" /></Svg></button>
        <div className="relative ml-1.5 h-3 w-[100px]">
          <input type="range" aria-label="Zoom" min="0" max="100" defaultValue="58" className="absolute inset-0 w-full opacity-0" />
          <Svg w={100} h={12} className="pointer-events-none">
            <path d="M0 6.500H100M50.500 4V9" stroke="#444" />
            <rect x="56" y="1" width="5" height="11" fill="#333" />
          </Svg>
        </div>
        <button type="button" aria-label="Zoom in" className="ml-[5px]"><Svg w={8} h={8}><path d="M0 3.500H8M3.500 0V8" stroke="#444" /></Svg></button>
        <span className="mr-[7px] ml-3">150%</span>
      </div>
    </footer>
  );
}

export default function App() {
  return (
    <div className="relative flex h-screen w-full flex-col overflow-hidden bg-[#e6e6e6] font-['Noto_Sans','Open_Sans',sans-serif]">
      <TitleBar />
      <Tabs />
      <Ribbon />
      <FormulaBar />
      <main className="flex min-h-0 flex-1 overflow-hidden">
        <Sheet />
        <div className="mr-[3px] ml-[3px] flex w-[15px] flex-col bg-[#dadada] pt-0.5">
          <ScrollArrow d="M0 6H8L4 2Z" label="Scroll up" className="h-[15px]" />
          <div className="h-[383px] w-full border border-t-2 border-[#777] bg-white" />
          <ScrollArrow d="M0 2H8L4 6Z" label="Scroll down" className="mt-auto h-[15px]" />
        </div>
      </main>
      <SheetTabs />
      <StatusBar />
      <SortDialog />
    </div>
  );
}
